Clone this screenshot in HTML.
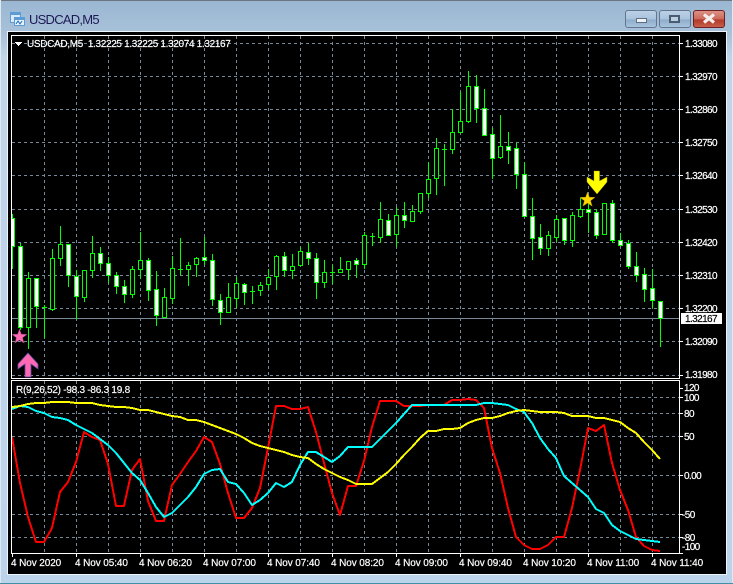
<!DOCTYPE html>
<html><head><meta charset="utf-8"><title>USDCAD,M5</title>
<style>
html,body{margin:0;padding:0;background:#bcd2e8;width:733px;height:584px;overflow:hidden}
svg{display:block}
text{font-family:"Liberation Sans",sans-serif;font-size:10px;fill:#fff;stroke:#fff;stroke-width:.2px}
</style></head><body>
<svg width="733" height="584" viewBox="0 0 733 584" xmlns="http://www.w3.org/2000/svg">
<defs>
<linearGradient id="bg" x1="0" y1="0" x2="0" y2="1"><stop offset="0" stop-color="#9ab6d2"/><stop offset=".06" stop-color="#a9c2da"/><stop offset=".1" stop-color="#c0d5ea"/><stop offset="1" stop-color="#bcd3ec"/></linearGradient>
<linearGradient id="btn" x1="0" y1="0" x2="0" y2="1"><stop offset="0" stop-color="#bdd1e6"/><stop offset=".5" stop-color="#a9c3dd"/><stop offset=".55" stop-color="#8fadcb"/><stop offset="1" stop-color="#a9c5e0"/></linearGradient>
<linearGradient id="cl" x1="0" y1="0" x2="0" y2="1"><stop offset="0" stop-color="#dd9487"/><stop offset=".5" stop-color="#cc6a5a"/><stop offset=".55" stop-color="#b23a2a"/><stop offset="1" stop-color="#c8604c"/></linearGradient>
<clipPath id="c1"><rect x="12" y="36" width="667" height="342"/></clipPath>
<clipPath id="c2"><rect x="12" y="381" width="667" height="172"/></clipPath>
</defs>
<rect width="733" height="584" fill="url(#bg)"/>
<path d="M0 .5H733" stroke="#6a7580" stroke-width="1"/>
<path d="M0 583.500H733" stroke="#3f8fa5"/>
<path d="M.5 0V583" stroke="#dfe8f0"/>
<path d="M732.500 0V583" stroke="#dfe8f0"/>
<!-- title icon -->
<g shape-rendering="crispEdges">
<rect x="10.5" y="12.5" width="10" height="10" fill="#dbeaf8" stroke="#5d9bd6"/><rect x="11" y="13" width="9" height="2" fill="#5d9bd6"/>
<rect x="14.5" y="17.5" width="10" height="8" fill="#e6f1fb" stroke="#5d9bd6"/><rect x="15" y="18" width="9" height="2" fill="#5d9bd6"/>
<path d="M16 24l2-3 2 3 2-3" stroke="#3c7fc2" fill="none"/>
</g>
<text x="29" y="24" style="font-size:13px;letter-spacing:-.75px;fill:#1c1a55;stroke:none">USDCAD,M5</text>
<!-- buttons -->
<rect x="625.5" y="10.5" width="31" height="17" rx="2.5" fill="url(#btn)" stroke="#62758c"/>
<rect x="636.5" y="18.5" width="10" height="4" fill="#eef3f8" stroke="#5f6f80"/>
<rect x="659.5" y="10.5" width="31" height="17" rx="2.5" fill="url(#btn)" stroke="#62758c"/>
<rect x="670" y="16" width="9" height="6" fill="#b9cfe4" stroke="#4c5c70" stroke-width="2"/>
<rect x="693.5" y="10.5" width="31" height="17" rx="2.5" fill="url(#cl)" stroke="#6d1f24"/>
<path d="M704 14.500l10 8M714 14.500l-10 8" stroke="#f3eeee" stroke-width="3.2"/>
<!-- client -->
<rect x="7" y="31" width="720" height="544" fill="#eef4fa"/>
<rect x="8" y="32" width="718" height="542" fill="#000"/>
<g shape-rendering="crispEdges">
<g stroke="#778899" stroke-dasharray="3 3" fill="none" clip-path="url(#c1)">
<path d="M12 43.5H679M12 76.5H679M12 109.5H679M12 142.5H679M12 175.5H679M12 209.5H679M12 242.5H679M12 275.5H679M12 308.5H679M12 341.5H679M12 375.5H679"/>
<path d="M44.5 36V378M76.5 36V378M108.5 36V378M140.5 36V378M172.5 36V378M204.5 36V378M236.5 36V378M268.5 36V378M300.5 36V378M332.5 36V378M364.5 36V378M396.5 36V378M428.5 36V378M460.5 36V378M492.5 36V378M524.5 36V378M556.5 36V378M588.5 36V378M620.5 36V378M652.5 36V378"/>
</g>
<g stroke="#778899" stroke-dasharray="3 3" fill="none" clip-path="url(#c2)">
<path d="M12 397.5H679M12 413.5H679M12 436.5H679M12 475.5H679M12 514.5H679M12 537.5H679"/>
<path d="M44.5 381V553M76.5 381V553M108.5 381V553M140.5 381V553M172.5 381V553M204.5 381V553M236.5 381V553M268.5 381V553M300.5 381V553M332.5 381V553M364.5 381V553M396.5 381V553M428.5 381V553M460.5 381V553M492.5 381V553M524.5 381V553M556.5 381V553M588.5 381V553M620.5 381V553M652.5 381V553"/>
</g>
<path d="M12 318.5H680" stroke="#778899"/>
<g clip-path="url(#c1)">
<path fill="none" stroke="#0f0" d="M12.5 214V269M20.5 243V330M28.5 272V349M36.5 278V328M44.5 305V338M52.5 249V311M60.5 226V266M68.5 244V287M76.5 270V319M84.5 270V302M92.5 236V278M100.5 247V271M108.5 257V283M116.5 272V294M124.5 280V303M132.5 266V298M140.5 232V279M148.5 258V301M156.5 271V326M164.5 288V318M172.5 256V304M180.5 238V275M188.5 262V286M196.5 257V277M204.5 237V265M212.5 254V306M220.5 294V325M228.5 283V312M236.5 277V308M244.5 283V305M252.5 286V304M260.5 282V296M268.5 269V290M276.5 255V290M284.5 252V277M292.5 254V279M300.5 247V265M308.5 243V265M316.5 253V299M324.5 260V288M332.5 265V284M340.5 257V272M348.5 261V280M356.5 258V278M364.5 232V269M372.5 233V246M380.5 202V243M388.5 214V235M396.5 207V247M404.5 202V228M412.5 205V221M420.5 193V214M428.5 162V198M436.5 138V195M444.5 144V186M452.5 109V154M460.5 92V132M468.5 71V123M476.5 75V123M484.5 89V135M492.5 128V179M500.5 115V159M508.5 132V164M516.5 143V189M524.5 162V216M532.5 198V260M540.5 224V255M548.5 231V256M556.5 215V242M564.5 218V245M572.5 212V247M580.5 198V218M588.5 200V233M596.5 209V239M604.5 203V234M612.5 200V243M620.5 233V245M628.5 240V269M636.5 252V282M644.5 268V302M652.5 269V308M660.5 301V347"/>
<path fill="none" stroke="#0f0" d="M42 307.5h5M178 269.5h5M250 291.5h5M330 272.5h5M370 236.5h5M442 149.5h5"/>
<path fill="#fff" stroke="#0f0" d="M10.5 218.5h4V246.5h-4zM18.5 246.5h4V327.5h-4zM34.5 278.5h4V306.5h-4zM66.5 244.5h4V275.5h-4zM74.5 276.5h4V296.5h-4zM98.5 253.5h4V263.5h-4zM106.5 263.5h4V275.5h-4zM114.5 275.5h4V286.5h-4zM122.5 286.5h4V294.5h-4zM146.5 260.5h4V290.5h-4zM154.5 289.5h4V315.5h-4zM202.5 257.5h4V260.5h-4zM210.5 260.5h4V299.5h-4zM218.5 300.5h4V312.5h-4zM242.5 284.5h4V292.5h-4zM282.5 256.5h4V270.5h-4zM306.5 252.5h4V258.5h-4zM314.5 258.5h4V282.5h-4zM354.5 260.5h4V264.5h-4zM386.5 220.5h4V235.5h-4zM402.5 215.5h4V220.5h-4zM474.5 86.5h4V108.5h-4zM482.5 108.5h4V135.5h-4zM490.5 134.5h4V158.5h-4zM506.5 146.5h4V150.5h-4zM514.5 148.5h4V174.5h-4zM522.5 174.5h4V216.5h-4zM530.5 216.5h4V238.5h-4zM538.5 237.5h4V248.5h-4zM562.5 218.5h4V240.5h-4zM586.5 209.5h4V212.5h-4zM594.5 212.5h4V235.5h-4zM610.5 203.5h4V240.5h-4zM618.5 240.5h4V245.5h-4zM626.5 243.5h4V266.5h-4zM634.5 266.5h4V275.5h-4zM642.5 274.5h4V289.5h-4zM650.5 288.5h4V300.5h-4zM658.5 301.5h4V318.5h-4z"/>
<path fill="#000" stroke="#0f0" d="M26.5 278.5h4V327.5h-4zM50.5 258.5h4V309.5h-4zM58.5 244.5h4V258.5h-4zM82.5 270.5h4V297.5h-4zM90.5 253.5h4V270.5h-4zM130.5 269.5h4V294.5h-4zM138.5 260.5h4V269.5h-4zM162.5 297.5h4V317.5h-4zM170.5 268.5h4V298.5h-4zM186.5 265.5h4V269.5h-4zM194.5 258.5h4V264.5h-4zM226.5 297.5h4V312.5h-4zM234.5 283.5h4V298.5h-4zM258.5 285.5h4V290.5h-4zM266.5 277.5h4V284.5h-4zM274.5 256.5h4V276.5h-4zM290.5 266.5h4V270.5h-4zM298.5 251.5h4V265.5h-4zM322.5 272.5h4V282.5h-4zM338.5 269.5h4V272.5h-4zM346.5 261.5h4V269.5h-4zM362.5 235.5h4V264.5h-4zM378.5 219.5h4V237.5h-4zM394.5 215.5h4V234.5h-4zM410.5 211.5h4V221.5h-4zM418.5 193.5h4V211.5h-4zM426.5 179.5h4V193.5h-4zM434.5 148.5h4V178.5h-4zM450.5 132.5h4V149.5h-4zM458.5 121.5h4V132.5h-4zM466.5 86.5h4V121.5h-4zM498.5 146.5h4V157.5h-4zM546.5 235.5h4V248.5h-4zM554.5 219.5h4V237.5h-4zM570.5 215.5h4V240.5h-4zM578.5 209.5h4V216.5h-4zM602.5 203.5h4V234.5h-4z"/>
</g>
<rect x="11.5" y="35.5" width="668" height="343" fill="none" stroke="#fff"/>
<rect x="11.5" y="380.5" width="668" height="173" fill="none" stroke="#fff"/>
<path stroke="#fff" d="M680 43.5h3M680 76.5h3M680 109.5h3M680 142.5h3M680 175.5h3M680 209.5h3M680 242.5h3M680 275.5h3M680 308.5h3M680 341.5h3M680 375.5h3M680 388.5h3M680 397.5h3M680 413.5h3M680 436.5h3M680 475.5h3M680 514.5h3M680 537.5h3M680 553.5h3M12.5 554v3M76.5 554v3M140.5 554v3M204.5 554v3M268.5 554v3M332.5 554v3M396.5 554v3M460.5 554v3M524.5 554v3M588.5 554v3M652.5 554v3"/>
<path fill="#fff" d="M15 42h7v1h-1v1h-1v1h-1v1h-1v-1h-1v-1h-1v-1h-1z"/>
<rect x="681" y="313" width="41" height="11" fill="#fff"/>
</g>
<!-- indicator lines -->
<g fill="none" stroke-width="2" clip-path="url(#c2)" stroke-linejoin="round" shape-rendering="crispEdges">
<polyline stroke="#f00" points="12,437 20,483 28,517 36,542 44,542 52,528 60,492 68,482 76,462 84,432 92,437 100,440 108,464 116,506 124,506 132,470 140,459 148,501 156,521 164,521 172,485 180,474 188,462 196,451 204,437 212,442 220,464 228,493 236,518 244,518 252,508 260,488 268,448 276,406 284,406 292,409 300,409 308,407 316,432 324,463 332,493 340,515 348,486 356,486 364,461 372,427 380,401 388,401 396,401 404,406 412,406 420,406 428,405 436,405 444,405 452,400 460,400 468,399 476,400 484,408 492,448 500,473 508,508 516,537 524,545 532,549 540,549 548,545 556,537 564,537 572,508 580,470 588,428 596,431 604,425 612,463 620,490 628,510 636,537 644,546 652,550 660,551"/>
<polyline stroke="#0ff" points="12,409 20,406 28,407 36,411 44,413 52,417 60,418 68,420 76,425 84,429 92,433 100,439 108,445 116,453 124,463 132,473 140,480 148,493 156,507 164,517 172,513 180,505 188,497 196,487 204,474 212,470 220,469 228,482 236,484 244,493 252,505 260,500 268,493 276,483 284,487 292,482 300,465 308,452 316,452 324,457 332,462 340,456 348,447 356,447 364,447 372,447 380,439 388,431 396,423 404,414 412,405 420,405 428,405 436,405 444,405 452,405 460,405 468,405 476,405 484,403 492,403 500,404 508,405 516,409 524,412 532,423 540,438 548,449 556,458 564,476 572,483 580,490 588,497 596,509 604,513 612,525 620,531 628,535 636,539 644,540 652,541 660,542"/>
<polyline stroke="#ff0" points="12,407 20,406 28,404 36,403 44,403 52,402 60,402 68,402 76,403 84,403 92,403 100,405 108,406 116,407 124,407 132,408 140,410 148,410 156,412 164,414 172,416 180,417 188,420 196,420 204,422 212,425 220,428 228,431 236,434 244,438 252,443 260,446 268,448 276,450 284,452 292,455 300,457 308,458 316,464 324,469 332,473 340,477 348,480 356,484 364,484 372,484 380,478 388,472 396,464 404,455 412,447 420,438 428,431 436,431 444,429 452,429 460,428 468,423 476,420 484,418 492,418 500,416 508,413 516,411 524,410 532,411 540,412 548,412 556,412 564,413 572,416 580,416 588,416 596,418 604,418 612,420 620,422 628,428 636,433 644,442 652,450 660,459"/>
</g>
<!-- markers -->
<path d="M19.5 329l1.9 5.2 5.6.2-4.4 3.4 1.6 5.4-4.7-3.1-4.7 3.1 1.6-5.4-4.4-3.4 5.6-.2z" fill="#ff69b4" stroke="#7d3f6a" stroke-width=".5"/>
<path d="M28 353l10 11v5l-7-5v13h-6v-13l-7 5v-5z" fill="#ff69b4" stroke="#5a4aa0" stroke-width=".8"/>
<path d="M594 171h5.500v10l7.500-4v5l-10 12-10-12v-5l7 4z" fill="#ffff00" stroke="#b8a000" stroke-width=".4"/>
<path d="M587.500 192l1.900 5.200 5.600.2-4.400 3.400 1.600 5.400-4.700-3.100-4.700 3.100 1.600-5.400-4.400-3.400 5.600-.2z" fill="#ffd700" stroke="#a08a00" stroke-width=".5"/>
<!-- text -->
<text x="27" y="47" style="letter-spacing:-.33px">USDCAD,M5 &#160;1.32225 1.32225 1.32074 1.32167</text>
<text x="16" y="393" style="letter-spacing:-.25px">R(9,26,52) -98.3 -86.3 19.8</text>
<g style="letter-spacing:-.6px">
<text x="685" y="47">1.33080</text><text x="685" y="80">1.32970</text><text x="685" y="113">1.32860</text><text x="685" y="146">1.32750</text><text x="685" y="179">1.32640</text><text x="685" y="213">1.32530</text><text x="685" y="246">1.32420</text><text x="685" y="279">1.32310</text><text x="685" y="312">1.32200</text>
<text x="685" y="322" style="fill:#000;stroke:#000">1.32167</text>
<text x="685" y="345">1.32090</text><text x="685" y="378">1.31980</text>
<text x="684" y="391">120</text><text x="684" y="401">100</text><text x="684" y="417">80</text><text x="684" y="440">50</text><text x="684" y="479">0.00</text><text x="682" y="518">-50</text><text x="682" y="541">-80</text><text x="682" y="550">-100</text>
</g>
<g style="letter-spacing:-.1px">
<text x="11" y="566">4 Nov 2020</text><text x="75" y="566">4 Nov 05:40</text><text x="139" y="566">4 Nov 06:20</text><text x="203" y="566">4 Nov 07:00</text><text x="267" y="566">4 Nov 07:40</text><text x="331" y="566">4 Nov 08:20</text><text x="395" y="566">4 Nov 09:00</text><text x="459" y="566">4 Nov 09:40</text><text x="523" y="566">4 Nov 10:20</text><text x="587" y="566">4 Nov 11:00</text><text x="651" y="566">4 Nov 11:40</text>
</g>
</svg>
</body></html>
